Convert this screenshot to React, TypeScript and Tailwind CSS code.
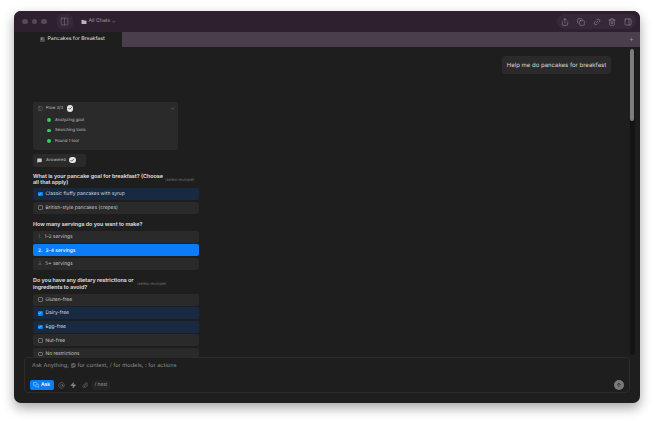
import React from "react";
import { ChevronDown, Share, Copy, Link2, Trash2, PanelRight, PanelLeft, Folder, Plus, AtSign, Zap, Paperclip, ArrowUp, Check, MessageSquare, MessagesSquare, Columns2 } from "lucide-react";

const F = { fontFamily: '"Inter","Liberation Sans",sans-serif' };

function CheckRow({ label, on }: { label: string; on?: boolean }) {
  return (
    <div className={`flex h-[12px] items-center rounded-[2px] pl-[5px] text-[4.9px] ${on ? "bg-[#182a42] text-[#d4d8de]" : "bg-[#2a2a2a] text-[#c6c6c6]"}`}>
      <span className={`box-border flex h-[4.5px] w-[4.5px] items-center justify-center rounded-[1px] ${on ? "bg-[#0a7cf0]" : "border border-[#6e6e6e]"}`}>
        {on && <Check size={4} strokeWidth={3} className="text-white" />}
      </span>
      <span className="ml-[3px] pt-[1.5px]">{label}</span>
    </div>
  );
}

function NumRow({ n, label, on }: { n: number; label: string; on?: boolean }) {
  return (
    <div className={`flex h-[12px] items-center gap-[3px] rounded-[2px] pl-[5px] pt-[1.5px] text-[4.9px] ${on ? "bg-[#0a7cf5] font-medium text-white" : "bg-[#2a2a2a] text-[#c6c6c6]"}`}>
      <span className={on ? "text-white" : "text-[#777]"}>{n}.</span>
      <span>{label}</span>
    </div>
  );
}

function Badge() {
  return (
    <span className="flex h-[6.5px] w-[6.5px] items-center justify-center rounded-full bg-[#e8e8e8]">
      <Check size={4.5} strokeWidth={3.5} className="text-[#222]" />
    </span>
  );
}

function Step({ label }: { label: string }) {
  return (
    <div className="flex h-[10.4px] items-center pl-[14px] text-[4.2px] text-[#c4c4c4]">
      <span className="h-[3.5px] w-[3.5px] rounded-full bg-[#34d058]" />
      <span className="ml-[4.5px] pt-[1.5px]">{label}</span>
    </div>
  );
}

export default function App() {
  return (
    <div className="h-[421px] w-[654px] overflow-hidden bg-white pl-[14px] pt-[11px] [text-rendering:geometricPrecision]" style={F}>
      <div className="flex h-[392px] w-[626px] flex-col overflow-hidden rounded-[7px] bg-[#1e1e1e] shadow-[0_5px_12px_rgba(0,0,0,0.35)]">
        <div className="flex h-[21px] shrink-0 items-center bg-[#2f2030] pl-[8px] pr-[4px]">
          <span className="h-[5.5px] w-[5.5px] rounded-full bg-[#544a56]" />
          <span className="ml-[4px] h-[5.5px] w-[5.5px] rounded-full bg-[#544a56]" />
          <span className="ml-[4px] h-[5.5px] w-[5.5px] rounded-full bg-[#544a56]" />
          <span className="ml-[10px] flex h-[15px] w-[16px] items-center justify-center rounded-[5px] bg-[#372839]">
            <Columns2 size={9} strokeWidth={1.2} className="text-[#8e858f]" />
          </span>
          <Folder size={6} fill="#b9b3ba" strokeWidth={0} className="ml-[8px]" />
          <span className="ml-[2px] pt-[1px] text-[5.2px] text-[#a49ca5]">All Chats</span>
          <ChevronDown size={5.5} className="ml-[1px] text-[#a49ca5]" />
          <div className="ml-auto flex h-[15px] items-center gap-[7.7px] rounded-[8px] bg-[#372839] px-[4px] text-[#b2abb3]">
            <Share size={8} strokeWidth={1.3} />
            <Copy size={8} strokeWidth={1.3} />
            <Link2 size={8} strokeWidth={1.3} className="-rotate-45" />
            <Trash2 size={8} strokeWidth={1.3} />
            <PanelRight size={8} strokeWidth={1.3} />
          </div>
        </div>

        <div className="flex h-[15px] shrink-0 bg-[#4a3e4c]">
          <div className="flex w-[108px] items-center gap-[3px] bg-[#1e1e1e] pl-[25.5px] text-[5.2px] font-medium text-[#cfcfcf]">
            <span className="flex h-[5px] w-[5px] items-center justify-center rounded-[1px] bg-[#4c4c4c] text-[3px] text-[#ccc]">E</span>
            <span className="pt-[1.5px]">Pancakes for Breakfast</span>
          </div>
          <Plus size={5} className="ml-auto mr-[6px] mt-[5px] text-[#b0a8b1]" />
        </div>

        <div className="relative min-h-0 flex-1 overflow-hidden">
          <div className="flex flex-col pl-[19px]">
            <div className="ml-[469px] mt-[9px] flex h-[18px] w-[109px] items-center justify-center rounded-[3px] bg-[#2a2a2a] text-[6px] text-[#d8d8d8]">
              Help me do pancakes for breakfast
            </div>

            <div className="mt-[28px] h-[48px] w-[145px] rounded-[2px] bg-[#2a2a2a]">
              <div className="flex h-[13px] items-center pl-[5px] pr-[3px] text-[4.2px] text-[#c4c4c4]">
                <PanelLeft size={5} strokeWidth={1.2} className="text-[#aaa]" />
                <span className="ml-[3px] mr-[3.5px] pt-[1.5px]">Flow 3/3</span>
                <Badge />
                <ChevronDown size={5} className="ml-auto text-[#999]" />
              </div>
              <Step label="Analyzing goal" />
              <Step label="Searching tools" />
              <Step label="Found 1 tool" />
            </div>

            <div className="mt-[3.5px] flex h-[13px] w-[53px] items-center rounded-[2px] bg-[#2a2a2a] pl-[4px] text-[4.2px] text-[#c4c4c4]">
              <MessageSquare size={5} fill="#ccc" className="text-[#ccc]" />
              <span className="ml-[4px] mr-[3.5px] pt-[1.5px]">Answered</span>
              <Badge />
            </div>

            <div className="mt-[6px] flex w-[166px] items-center pt-[1px] text-[5.4px] font-semibold leading-[6.8px] text-[#e2e2e2]">
              <span className="w-[132px]">What is your pancake goal for breakfast? (Choose all that apply)</span>
              <span className="whitespace-nowrap text-[3.9px] font-normal text-[#6e6e6e]">(select multiple)</span>
            </div>
            <div className="mt-[1px] flex w-[166px] flex-col gap-[1.6px]">
              <CheckRow label="Classic fluffy pancakes with syrup" on />
              <CheckRow label="British-style pancakes (crepes)" />
            </div>

            <div className="mt-[8px] w-[166px] text-[5.4px] font-semibold leading-[7.2px] text-[#e2e2e2]">How many servings do you want to make?</div>
            <div className="mt-[2px] flex w-[166px] flex-col gap-[1.6px]">
              <NumRow n={1} label="1-2 servings" />
              <NumRow n={2} label="3-4 servings" on />
              <NumRow n={3} label="5+ servings" />
            </div>

            <div className="mt-[7px] flex w-[166px] items-center pt-[1px] text-[5.4px] font-semibold leading-[6.8px] text-[#e2e2e2]">
              <span className="w-[104px]">Do you have any dietary restrictions or ingredients to avoid?</span>
              <span className="whitespace-nowrap text-[3.9px] font-normal text-[#6e6e6e]">(select multiple)</span>
            </div>
            <div className="mt-[2px] flex w-[166px] flex-col gap-[1.6px]">
              <CheckRow label="Gluten-free" />
              <CheckRow label="Dairy-free" on />
              <CheckRow label="Egg-free" on />
              <CheckRow label="Nut-free" />
              <CheckRow label="No restrictions" />
            </div>
          </div>
          <div className="absolute right-[5px] top-[2px] h-[306px] w-[5px] rounded-[3px] bg-[#141414]">
            <div className="h-[72px] w-[4px] rounded-[2px] bg-[#7d7d7d]" />
          </div>
        </div>

        <div className="relative z-10 mx-[10px] mb-[10px] -mt-[10px] h-[36px] shrink-0 rounded-[4px] border-[0.5px] border-[#2c2c2c] bg-[#1e1e1e] pl-[7px] pr-[5px]">
          <div className="pt-[3.5px] text-[5.65px] leading-[8px] text-[#8e8e8e]">Ask Anything, @ for context, / for models, : for actions</div>
          <div className="mt-[10.5px] flex h-[10px] items-center">
            <span className="-ml-[2.5px] flex h-[9.5px] w-[24px] items-center justify-center gap-[2px] rounded-[2px] bg-[#0a7cf5] text-[5px] font-semibold text-white">
              <MessagesSquare size={6} strokeWidth={1.5} />
              <span className="pt-[1.5px]">Ask</span>
            </span>
            <AtSign size={7} strokeWidth={1.4} className="ml-[4.5px] text-[#8a8a8a]" />
            <Zap size={6.5} strokeWidth={1.4} fill="#8a8a8a" className="ml-[5px] text-[#8a8a8a]" />
            <Paperclip size={6.5} strokeWidth={1.5} className="ml-[5px] text-[#8a8a8a]" />
            <span className="ml-[4px] flex h-[9.5px] items-center rounded-[2px] bg-[#242424] px-[2.5px] pt-[1.5px] text-[4.8px] text-[#9a9a9a]">/ best</span>
            <span className="ml-auto flex h-[10px] w-[10px] items-center justify-center rounded-full bg-[#7a7a7a]">
              <ArrowUp size={6} strokeWidth={2.5} className="text-[#1e1e1e]" />
            </span>
          </div>
        </div>
      </div>
    </div>
  );
}
